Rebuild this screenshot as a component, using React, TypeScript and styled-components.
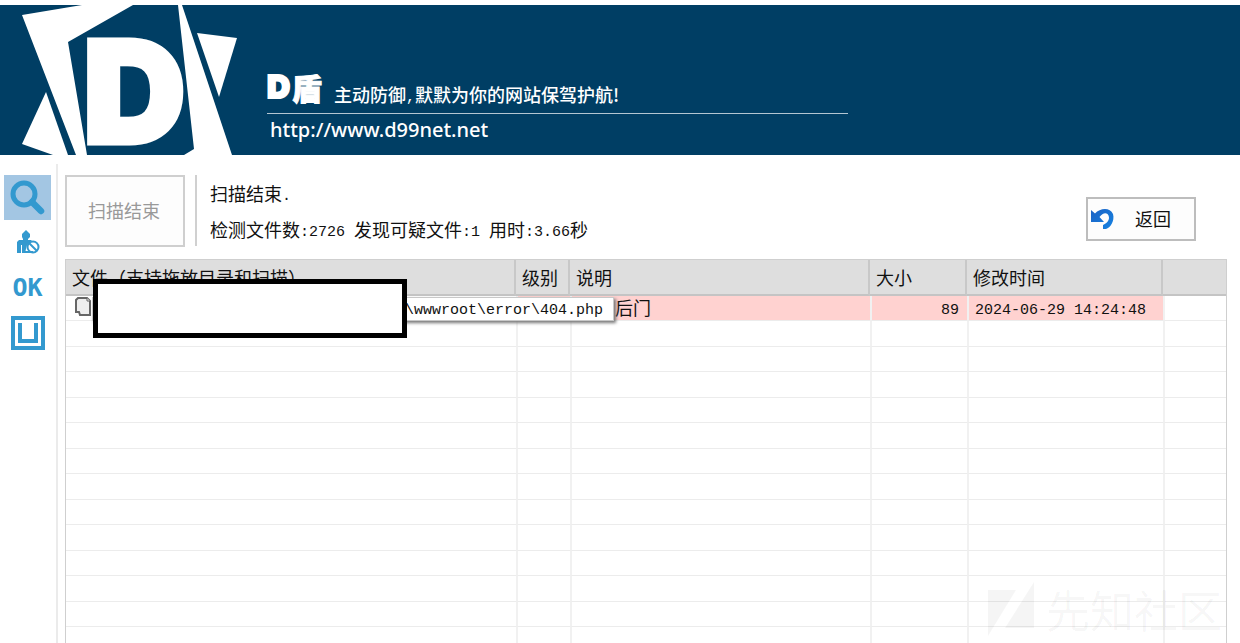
import React from "react";
import styled, { createGlobalStyle, css } from "styled-components";

const GlobalStyle = createGlobalStyle`
  * { box-sizing: border-box; }
  body {
    margin: 0;
    background: #fff;
    color: #111;
    font-family: "Noto Sans CJK SC", sans-serif;
    font-size: 18px;
    line-height: 24px;
  }
`;

const Window = styled.div`
  display: flex;
  flex-direction: column;
  height: 100vh;
  padding-top: 5px;
  overflow: hidden;
  position: relative;
`;

const Banner = styled.header`
  display: flex;
  flex: none;
  height: 150px;
  background: #003e64;
  color: #fff;
`;

const LogoMark = styled.svg`
  flex: none;
  width: 267px;
  height: 150px;
  overflow: visible;
  fill: #fff;
  font: 900 142px/150px "Inter", sans-serif;
`;

const BannerText = styled.div`
  width: 581px;
  padding-top: 62px;
`;

const TitleLine = styled.div`
  display: flex;
  align-items: flex-end;
  gap: 12px;
  height: 47px;
  padding-bottom: 6px;
  border-bottom: 1px solid #b4c6d2;
`;

const Title = styled.h1`
  display: flex;
  align-items: center;
  margin: 0;
  font-size: 30px;
  line-height: 40px;
  font-weight: 900;
  -webkit-text-stroke: 1px #fff;
`;

const TitleLetter = styled.span`
  width: 25px;
  font-family: "Inter", sans-serif;
  font-size: 32px;
  font-weight: 900;
  -webkit-text-stroke: 2px #fff;
`;

const Slogan = styled.p`
  margin: 0;
  line-height: 26px;
  white-space: nowrap;
  font-weight: 500;
`;

const SiteLink = styled.a`
  display: block;
  padding: 3px;
  color: #fff;
  font: 500 20px/26px "Noto Sans", sans-serif;
  text-decoration: none;
`;

const Body = styled.div`
  display: flex;
  flex: 1;
  min-height: 0;
  padding-top: 9px;
`;

const Sidebar = styled.nav`
  display: flex;
  flex: none;
  flex-direction: column;
  width: 58px;
  padding: 11px 5px 0 4px;
  border-right: 2px solid #ebebeb;
`;

const SideButton = styled.button<{ $active?: boolean }>`
  display: flex;
  align-items: center;
  justify-content: center;
  width: 47px;
  height: 45px;
  padding: 0;
  border: 0;
  background: ${(p) => (p.$active ? "#a3c6e3" : "transparent")};
  color: #3399cf;
  font: 700 25px/28px "DejaVu Sans Mono", monospace;
`;

const Main = styled.main`
  display: flex;
  flex: 1;
  flex-direction: column;
  min-width: 0;
  padding: 11px 13px 0 7px;
`;

const Toolbar = styled.div`
  display: flex;
  flex: none;
  height: 84px;
`;

const plainButton = css`
  border: 2px solid #cfcfcf;
  background: #fdfdfd;
  font-family: inherit;
  font-size: 18px;
`;

const ScanButton = styled.button`
  ${plainButton}
  width: 120px;
  height: 72px;
  padding: 0 2px 2px 0;
  color: #999;
`;

const Status = styled.div`
  flex: 1;
  height: 71px;
  margin-left: 10px;
  padding: 6px 0 0 13px;
  border-left: 2px solid #d0d0d0;
`;

const StatusLine = styled.p`
  margin: 0 0 12px;
  white-space: pre;
`;

const Latin = styled.span`
  font-family: "Liberation Mono", monospace;
  font-size: 15px;
  line-height: 1px;
  vertical-align: 1px;
`;

const BackButton = styled.button`
  ${plainButton}
  display: flex;
  align-items: center;
  gap: 20px;
  width: 110px;
  height: 44px;
  margin: 22px 31px 0 0;
  padding: 0 2px 2px 1px;
  border-color: #bdbdbd;
  color: #111;
`;

const TableFrame = styled.div`
  flex: 1;
  min-height: 0;
  border: solid #cfcfcf;
  border-width: 1px 1px 0;
  overflow: hidden;
`;

const FileTable = styled.table`
  width: 100%;
  table-layout: fixed;
  border-collapse: separate;
  border-spacing: 0;
`;

const HeadCell = styled.th`
  height: 36px;
  padding: 0 6px;
  border-right: 2px solid #c8c8c8;
  border-bottom: 2px solid #c4c4c4;
  background: #dedede;
  font-weight: 400;
  text-align: left;
  white-space: nowrap;
  &:last-child { border-right: 0; }
`;

const Row = styled.tr<{ $flagged?: boolean }>`
  height: 26px;
  &:nth-child(odd) { height: 25px; }
  ${(p) => p.$flagged && css`
    td:not(:first-child):not(:last-child) { background: #ffd2d0; }
  `}
`;

const Cell = styled.td<{ $right?: boolean }>`
  position: relative;
  padding: 0 8px 2px 6px;
  border-bottom: 1px solid #ececec;
  line-height: 22px;
  text-align: ${(p) => (p.$right ? "right" : "left")};
  white-space: nowrap;
  & + & { border-left: 2px solid #f1f1f1; }
`;

const FileIcon = styled.svg`
  display: block;
  width: 18px;
  height: 20px;
  margin-left: 2px;
`;

const Note = styled.span`
  padding-left: 37px;
`;

const Tooltip = styled.div`
  position: absolute;
  z-index: 1;
  top: 1px;
  left: 26px;
  width: 522px;
  height: 24px;
  padding-right: 10px;
  border: 1px solid #c8c8c8;
  background: #fff;
  box-shadow: 2px 2px 3px #777;
  line-height: 18px;
  text-align: right;
`;

const Redaction = styled.div`
  position: absolute;
  z-index: 2;
  top: -17px;
  left: 27px;
  width: 314px;
  height: 59px;
  border: 5px solid #000;
  background: #fff;
`;

const Watermark = styled.div`
  position: absolute;
  z-index: 3;
  right: 18px;
  bottom: 4px;
  display: flex;
  align-items: center;
  gap: 12px;
  color: rgba(0, 0, 0, 0.04);
  font-size: 44px;
  line-height: 60px;
  pointer-events: none;
`;

const emptyRows = Array.from({ length: 14 }, (_, i) => i);

export default function App() {
  return (
    <Window>
      <GlobalStyle />
      <Banner>
        <LogoMark viewBox="0 0 267 150" aria-label="D">
          <path d="M22 10 82 0H133L68 37 87 150H76Z" />
          <path d="M46 87 68 150H53L22 139Z" />
          <path d="M178 0H182L232 150H184L194 144Z" />
          <path d="M197 28 237 33 219 92Z" />
          <text x="83" y="138" stroke="#fff" strokeWidth="5">D</text>
        </LogoMark>
        <BannerText>
          <TitleLine>
            <Title><TitleLetter>D</TitleLetter>盾</Title>
            <Slogan>主动防御<Latin>,</Latin>默默为你的网站保驾护航!</Slogan>
          </TitleLine>
          <SiteLink href="http://www.d99net.net">http://www.d99net.net</SiteLink>
        </BannerText>
      </Banner>
      <Body>
        <Sidebar>
          <SideButton $active aria-label="扫描">
            <svg width="36" height="36" viewBox="0 0 36 36" fill="none" stroke="currentColor">
              <circle cx="14" cy="14" r="11" strokeWidth="5" />
              <path d="M22 22 31 31" strokeWidth="6.500" strokeLinecap="round" />
            </svg>
          </SideButton>
          <SideButton aria-label="用户">
            <svg width="24" height="26" viewBox="0 0 24 26" fill="currentColor">
              <path d="M10 0 14 4V7L12 9V10H16L11 15 9 23H6V15H5V23H1V12L3 10H7V9L6 7V4Z" />
              <circle cx="17" cy="17" r="5.500" fill="#fff" stroke="currentColor" strokeWidth="2" />
              <path d="M13 13 21 21M6 22H17" stroke="currentColor" strokeWidth="2" />
            </svg>
          </SideButton>
          <SideButton>OK</SideButton>
          <SideButton aria-label="U">
            <svg width="34" height="34" viewBox="0 0 34 34" fill="none" stroke="currentColor">
              <rect x="2" y="2" width="30" height="30" strokeWidth="4" />
              <path d="M9 7V25H25V7" strokeWidth="4" />
            </svg>
          </SideButton>
        </Sidebar>
        <Main>
          <Toolbar>
            <ScanButton disabled>扫描结束</ScanButton>
            <Status>
              <StatusLine>扫描结束<Latin>.</Latin></StatusLine>
              <StatusLine>
                检测文件数<Latin>{":2726 "}</Latin>发现可疑文件<Latin>{":1 "}</Latin>用时<Latin>:3.66</Latin>秒
              </StatusLine>
            </Status>
            <BackButton>
              <svg width="26" height="24" viewBox="0 0 26 24">
                <defs>
                  <linearGradient id="arrow" x1="0" y1="0" x2="1" y2="1">
                    <stop offset="0" stopColor="#1c62c4" />
                    <stop offset="1" stopColor="#1683e2" />
                  </linearGradient>
                </defs>
                <path
                  d="M2 4 6 7.500C11 2 21 1 24 8 26 15 21 22 17 23H14V19C19 17 22 12 18.500 8 16 6 13 8 10.500 11L15 16H2Z"
                  fill="url(#arrow)"
                />
              </svg>
              返回
            </BackButton>
          </Toolbar>
          <TableFrame>
            <FileTable>
              <colgroup>
                <col style={{ width: 450 }} />
                <col style={{ width: 54 }} />
                <col />
                <col style={{ width: 97 }} />
                <col style={{ width: 196 }} />
                <col style={{ width: 63 }} />
              </colgroup>
              <thead>
                <tr>
                  <HeadCell>文件（支持拖放目录和扫描）</HeadCell>
                  <HeadCell>级别</HeadCell>
                  <HeadCell>说明</HeadCell>
                  <HeadCell>大小</HeadCell>
                  <HeadCell>修改时间</HeadCell>
                  <HeadCell />
                </tr>
              </thead>
              <tbody>
                <Row $flagged>
                  <Cell>
                    <FileIcon viewBox="0 1 18 20" fill="#eee" stroke="#666" strokeWidth="2">
                      <path d="M4 2H13L16 5V19H6L5 16H2V4Z" />
                      <path d="M13 2V5H16" strokeWidth="1" />
                    </FileIcon>
                    <Tooltip role="tooltip"><Latin>\wwwroot\error\404.php</Latin></Tooltip>
                    <Redaction />
                  </Cell>
                  <Cell />
                  <Cell><Note>后门</Note></Cell>
                  <Cell $right><Latin>89</Latin></Cell>
                  <Cell><Latin>2024-06-29 14:24:48</Latin></Cell>
                  <Cell />
                </Row>
                {emptyRows.map((i) => (
                  <Row key={i}>
                    <Cell /><Cell /><Cell /><Cell /><Cell /><Cell />
                  </Row>
                ))}
              </tbody>
            </FileTable>
          </TableFrame>
        </Main>
      </Body>
      <Watermark>
        <svg width="46" height="54" viewBox="0 0 46 54" fill="currentColor">
          <path d="M0 8H28L0 54Z" />
          <path d="M46 0V46H17Z" />
        </svg>
        先知社区
      </Watermark>
    </Window>
  );
}
